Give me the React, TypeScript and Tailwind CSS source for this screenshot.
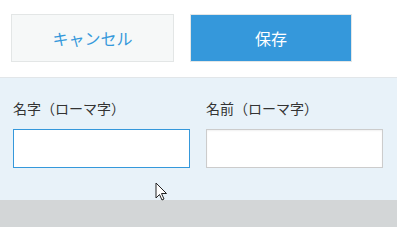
export default function App() {
  return (
    <div className="relative h-[227px] w-[397px] overflow-hidden bg-white font-['Noto_Sans_CJK_JP','Noto_Sans',sans-serif]">
      {/* Buttons */}
      <div className="flex h-[77px] items-start gap-4 px-[11px] pt-[14px]">
        <button className="flex h-[48px] w-[163px] items-center justify-center border border-[#e3e6e6] bg-[#f6f8f8] text-[16px] text-[#3598db]">
          キャンセル
        </button>
        <button className="flex h-[48px] w-[162px] items-center justify-center border border-[#e3e6e6] bg-[#3598db] text-[16px] text-white">
          保存
        </button>
      </div>

      {/* Form */}
      <div className="h-[123px] border-t border-[#e2e6e9] bg-[#e8f2f9] px-[13px] pt-[21px]">
        <div className="grid grid-cols-[177px_177px] gap-[16px]">
          <div>
            <div className="mb-[11px] text-[14px] leading-[19px] text-[#333]">名字（ローマ字）</div>
            <div className="h-[39px] border border-[color:#3598db] bg-white">
              <input className="h-full w-full bg-white px-2 outline-none" />
            </div>
          </div>
          <div>
            <div className="mb-[11px] text-[14px] leading-[19px] text-[#333]">名前（ローマ字）</div>
            <div className="h-[39px] border border-[color:#cccccc] bg-white shadow-[inset_0_1px_2px_rgba(0,0,0,0.06)]">
              <input className="h-full w-full bg-transparent px-2 outline-none" />
            </div>
          </div>
        </div>
      </div>

      <div className="h-[27px] bg-[#d3d6d7]" />

      {/* Mouse cursor */}
      <svg className="absolute left-[155px] top-[182px]" width="13" height="20" viewBox="0 0 13 20">
        <path d="M1 1 L1 16 L4.5 12.5 L7 18 L9 17 L6.5 11.5 L11.5 11.5 Z" fill="white" stroke="#222" strokeWidth="1" strokeLinejoin="round" />
      </svg>
    </div>
  );
}
